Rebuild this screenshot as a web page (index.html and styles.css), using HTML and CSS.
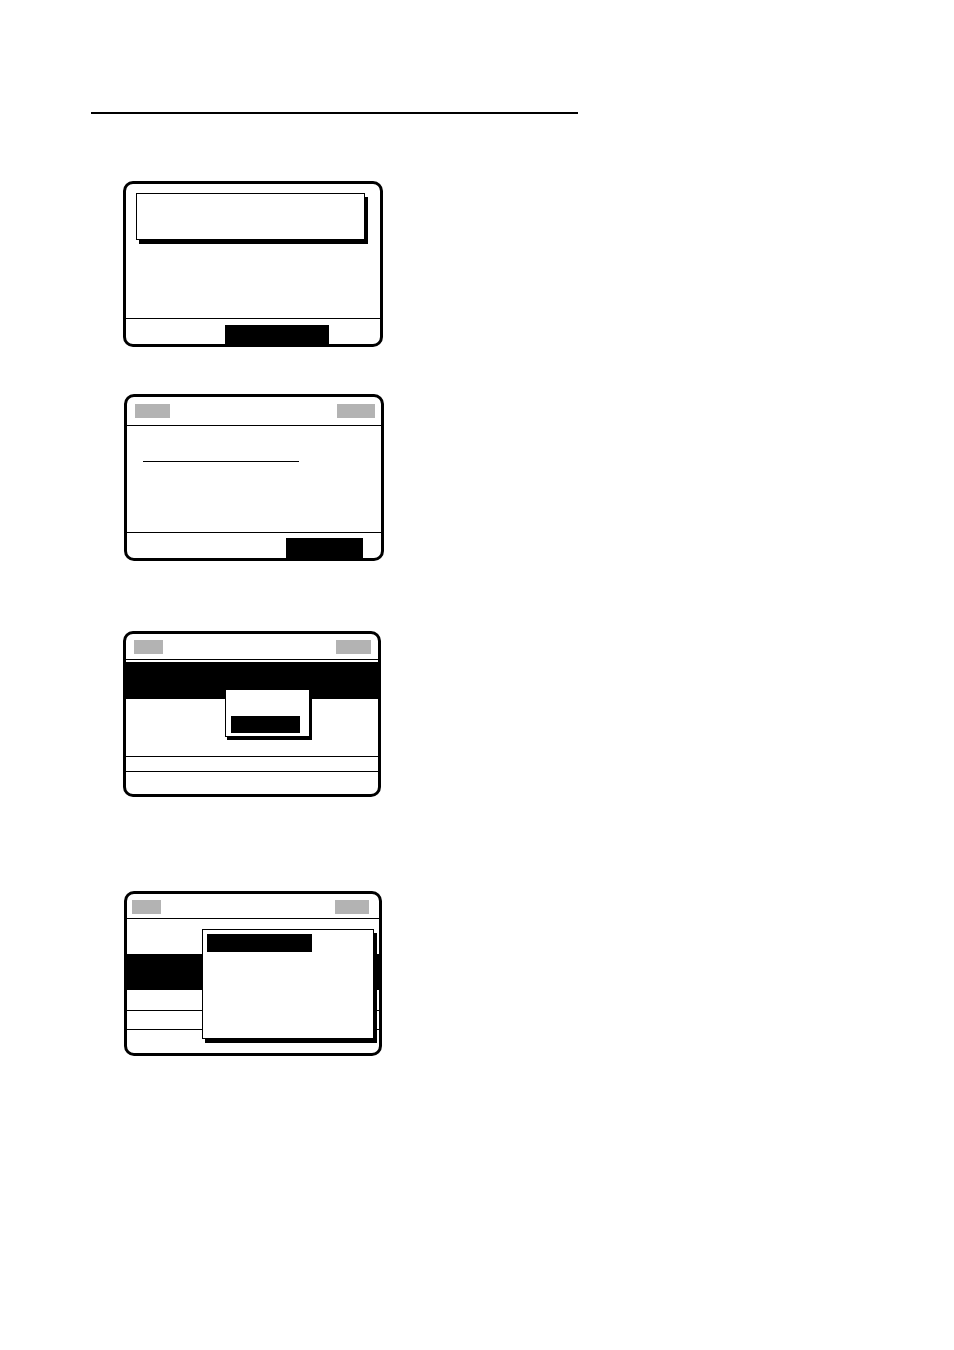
FILE: index.html
```html
<!DOCTYPE html>
<html>
<head>
<meta charset="utf-8">
<link rel="stylesheet" href="styles.css">
</head>
<body>
<div class="page">
  <div class="rule"></div>

  <div class="screen s1">
    <div class="msg"></div>
    <div class="grow"></div>
    <div class="hr"></div>
    <div class="foot f1"><div class="key k1"></div></div>
  </div>

  <div class="screen s2">
    <div class="head h2"><span class="tag t2l"></span><span class="tag t2r"></span></div>
    <div class="hr"></div>
    <div class="uline"></div>
    <div class="grow"></div>
    <div class="hr"></div>
    <div class="foot f2"><div class="key k2"></div></div>
  </div>

  <div class="screen s3">
    <div class="head h3"><span class="tag t3l"></span><span class="tag t3r"></span></div>
    <div class="hr"></div>
    <div class="sel sel3"></div>
    <div class="blank b3a"></div>
    <div class="hr"></div>
    <div class="blank b3b"></div>
    <div class="hr"></div>
    <div class="popup p3"><div class="pick pk3"></div></div>
  </div>

  <div class="screen s4">
    <div class="head h4"><span class="tag t4l"></span><span class="tag t4r"></span></div>
    <div class="hr"></div>
    <div class="blank b4a"></div>
    <div class="sel sel4"></div>
    <div class="blank b4b"></div>
    <div class="hr"></div>
    <div class="blank b4c"></div>
    <div class="hr"></div>
    <div class="popup p4"><div class="pick pk4"></div></div>
  </div>
</div>
</body>
</html>
```

FILE: styles.css
```css
html, body {
  margin: 0;
  padding: 0;
  background: #fff;
  font-family: "Liberation Sans", Arial, sans-serif;
}

.page {
  display: flex;
  flex-direction: column;
  align-items: flex-start;
  padding-top: 112px;
}

.rule {
  margin-left: 91px;
  width: 487px;
  height: 2px;
  background: #000;
}

.screen {
  position: relative;
  box-sizing: border-box;
  border: 3px solid #000;
  border-radius: 10px;
  display: flex;
  flex-direction: column;
  background: #fff;
}

.s1 { margin: 67px 0 0 123px; width: 260px; height: 166px; }
.s2 { margin: 47px 0 0 124px; width: 260px; height: 167px; }
.s3 { margin: 70px 0 0 123px; width: 258px; height: 166px; }
.s4 { margin: 94px 0 0 124px; width: 258px; height: 165px; }

.grow { flex: 1; }

.hr {
  height: 1px;
  background: #000;
  flex: none;
}

.msg {
  box-sizing: border-box;
  margin: 9px 0 0 10px;
  width: 229px;
  height: 47px;
  border: 1px solid #000;
  box-shadow: 3px 4px 0 0 #000;
  flex: none;
}

.foot { flex: none; display: flex; }
.f1 { height: 25px; padding-left: 99px; }
.f2 { height: 25px; padding-left: 159px; }

.key { background: #000; margin-top: 6px; }
.k1 { width: 104px; height: 19px; }
.k2 { width: 77px; height: 20px; margin-top: 5px; }

.head {
  flex: none;
  display: flex;
  justify-content: space-between;
  align-items: flex-start;
  box-sizing: border-box;
}
.tag { display: block; height: 14px; background: #b3b3b3; }

.h2 { height: 28px; padding: 7px 6px 0 8px; }
.t2l { width: 35px; }
.t2r { width: 38px; }

.h3 { height: 25px; padding: 6px 7px 0 8px; }
.t3l { width: 29px; }
.t3r { width: 35px; }

.h4 { height: 24px; padding: 6px 10px 0 5px; }
.t4l { width: 29px; }
.t4r { width: 34px; }

.uline {
  flex: none;
  margin: 35px 0 0 16px;
  width: 156px;
  height: 1px;
  background: #000;
}

.sel { flex: none; background: #000; }
.sel3 { height: 37px; margin-top: 2px; }
.sel4 { height: 36px; }

.blank { flex: none; }
.b3a { height: 57px; }
.b3b { height: 14px; }
.b4a { height: 35px; }
.b4b { height: 20px; }
.b4c { height: 18px; }

.popup {
  position: absolute;
  box-sizing: border-box;
  background: #fff;
  border: 1px solid #000;
}
.p3 {
  left: 99px;
  top: 56px;
  width: 85px;
  height: 47px;
  border-top: none;
  box-shadow: 2px 3px 0 0 #000;
}
.p4 {
  left: 75px;
  top: 35px;
  width: 172px;
  height: 110px;
  box-shadow: 3px 4px 0 0 #000;
}

.pick { background: #000; }
.pk3 { margin: 26px 0 0 5px; width: 69px; height: 17px; }
.pk4 { margin: 4px 0 0 4px; width: 105px; height: 18px; }
```
